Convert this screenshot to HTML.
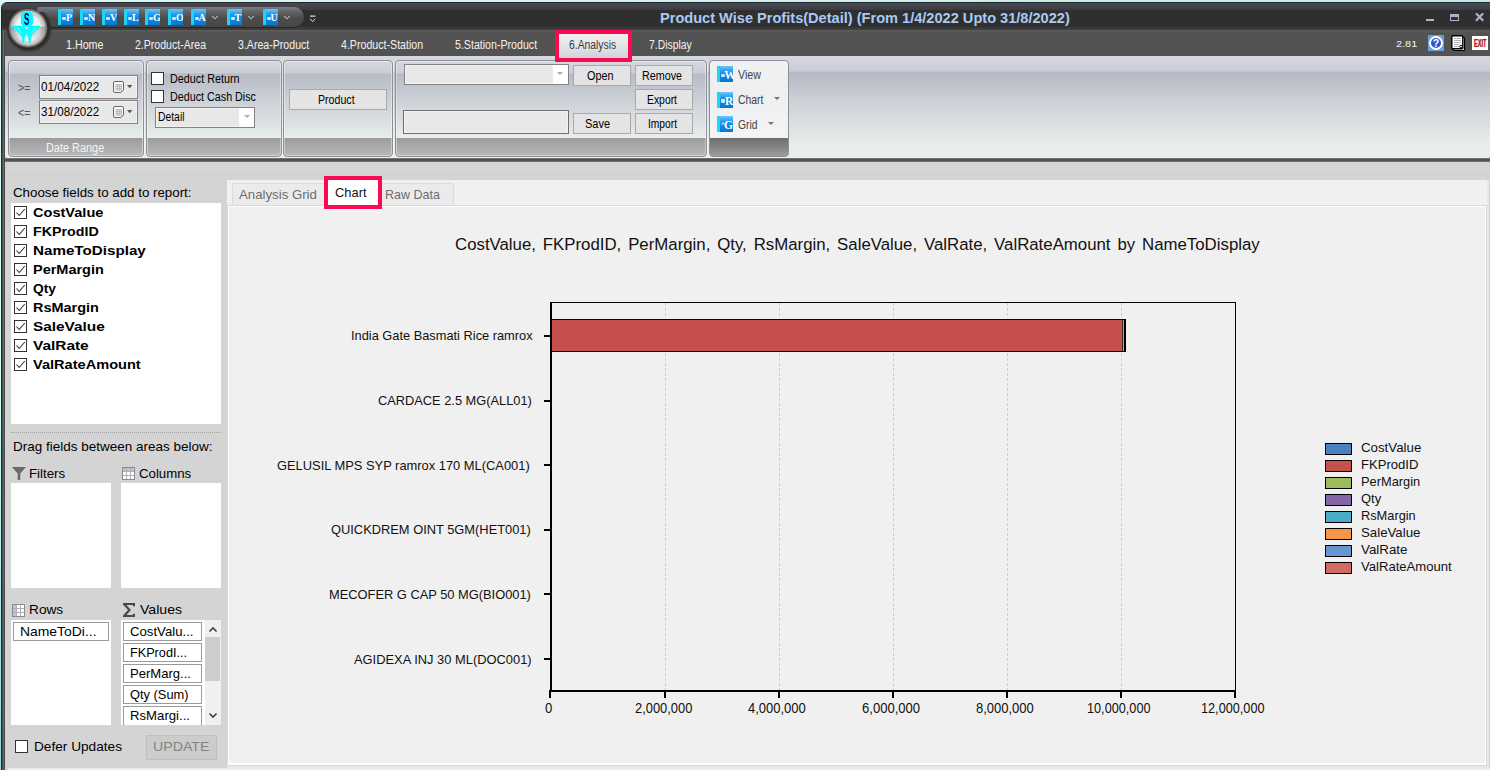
<!DOCTYPE html>
<html><head><meta charset="utf-8"><title>Product Wise Profits</title>
<style>
*{box-sizing:border-box;margin:0;padding:0}
html,body{width:1490px;height:770px;overflow:hidden}
body{position:relative;background:linear-gradient(#dcf8f4 0%,#ccfffa 50%,#8fd9d9 100%);font-family:"Liberation Sans",sans-serif;font-size:12px}
.a{position:absolute}
.t{position:absolute;white-space:pre;line-height:1;transform-origin:0 50%}
#win{left:1px;top:2px;width:1489px;height:768px;background:#d4d4d4;border-radius:6px 0 0 0;overflow:hidden}
/* title bar */
#tb{left:0;top:0;width:1489px;height:28px;background:linear-gradient(#25262a 0,#25262a 1px,#474a55 1px,#3a3c44 8px,#2f2f2f 8px,#2f2f2f 24px,#3a3a3a 26px,#424242 28px)}
#tabrow{left:0;top:28px;width:1489px;height:26px;background:linear-gradient(#5c5c5c 0,#565656 2px,#525252 3px,#525252 100%)}
#lb{left:0;top:28px;width:4px;height:740px;background:linear-gradient(90deg,#2a2a2a 0,#2a2a2a 1px,#4a4a4a 1px,#4a4a4a 2px,#686868 2px,#686868 3px,#484848 3px,#484848 4px)}
/* QAT */
#qat{left:36px;top:5px;width:267px;height:20px;border-radius:3px 10px 10px 3px;background:linear-gradient(#7a7e86 0,#6a6c70 15%,#5a5a5a 35%,#4c4c4c 55%,#474747 100%);box-shadow:0 1px 0 #262626,0 2px 0 #3a3a3a}
.qi{position:absolute;height:16px;background:linear-gradient(#74c6fb 0,#38a8f2 22%,#0e8ae6 50%,#0878d2 100%);border-left:3px solid #20d4f6;color:#fff;font-family:"Liberation Serif",serif;font-weight:bold;overflow:hidden;white-space:nowrap}
.qi b{position:absolute;top:1px;line-height:16px}
.qi i{position:absolute;left:1px;top:7.5px;width:4px;height:3.5px;background:#cfe6fb;border-radius:1px}
.chev{position:absolute;width:6px;height:6px;border-right:1.3px solid #d8d8d8;border-bottom:1.3px solid #d8d8d8;transform:rotate(45deg) scale(1,1)}
/* ribbon */
#rib{left:4px;top:54px;width:1485px;height:102px;border-radius:4px 3px 4px 4px;background:linear-gradient(#d6d9df 0,#c9cdd5 15px,#b4b9c5 16.5px,#c0c4cd 30px,#cdd0d6 45px,#dadedf 65px,#e6ecec 88px,#e9f0f0 100%);}
#ribsh{left:4px;top:156px;width:1485px;height:4px;background:linear-gradient(#8c8c8c,#505050 30%,#555 75%,#8a8a8a)}
.grp{position:absolute;top:58px;height:97px;border:1px solid #8e9096;border-radius:4px;background:linear-gradient(#d6d9df 0,#cacdd5 12px,#b6bbc6 13px,#c2c6ce 27px,#cfd2d8 42px,#dce0e1 62px,#e8eeee 77px,#9c9c9c 77px,#bcbcbc 97px);box-shadow:inset 0 0 0 1px rgba(255,255,255,.4),1px 0 0 rgba(255,255,255,.5)}
.grp.hot{box-shadow:none;background:linear-gradient(#f0f1f3 0,#eeeff1 40px,#f3f4f4 77px,#6c6c6c 77px,#a2a2a2 97px)}
.btn{position:absolute;background:#e4e4e4;border:1px solid #a9a9a9}
.inp{position:absolute;background:#e8e8e8;border:1px solid #838383;box-shadow:inset 0 0 0 1px #f2f2f2}
.cb{position:absolute;width:13px;height:13px;background:#fff;border:1px solid #333}
.dd{position:absolute;width:0;height:0;border-left:3px solid transparent;border-right:3px solid transparent;border-top:3.5px solid #777}
/* left panel */
.wbox{position:absolute;background:#fff}
.chip{position:absolute;background:#fff;border:1px solid #9a9a9a;height:19px}
.chk{position:absolute;width:13px;height:13px;border:1px solid #333;background:#fff}
.chk svg{position:absolute;left:0;top:0}
</style></head><body>
<div class="a" style="left:0;top:0;width:1490px;height:3px;background:linear-gradient(90deg,#dcf8f4,#bfece6)"></div>
<div id="win" class="a">
 <div id="tb" class="a"></div>
 <div id="tabrow" class="a"></div>
 <div id="lb" class="a"></div>
 <div class="a" style="left:0;top:5px;width:1px;height:23px;background:#222"></div>
 <!-- QAT -->
 <div id="qat" class="a"></div>
 <div id="orbshade" class="a" style="left:4px;top:3px;width:48px;height:48px;border-radius:50%;background:radial-gradient(circle at 50% 50%,#2c2c2c 60%,rgba(44,44,44,0) 70%);clip-path:inset(7px 0 0 0)"></div>
 <div class="qi" style="left:57px;top:7px;width:15px;font-size:10px"><i></i><b style="left:5px">P</b></div>
 <div class="qi" style="left:79px;top:7px;width:15px;font-size:10px"><i></i><b style="left:5px">N</b></div>
 <div class="qi" style="left:101px;top:7px;width:15px;font-size:10px"><i></i><b style="left:5px">V</b></div>
 <div class="qi" style="left:123px;top:7px;width:15px;font-size:10px"><i></i><b style="left:5px">L</b></div>
 <div class="qi" style="left:144px;top:7px;width:15px;font-size:10px"><i></i><b style="left:5px">G</b></div>
 <div class="qi" style="left:167px;top:7px;width:15px;font-size:10px"><i></i><b style="left:5px">O</b></div>
 <div class="qi" style="left:189.5px;top:7px;width:15px;font-size:10px"><i></i><b style="left:5px">A</b></div>
 <div class="qi" style="left:225.5px;top:7px;width:15px;font-size:10px"><i></i><b style="left:5px">T</b></div>
 <div class="qi" style="left:261.5px;top:7px;width:15px;font-size:10px"><i></i><b style="left:5px">U</b></div>
 <svg class="a" style="left:210.4px;top:13px" width="8" height="6" viewBox="0 0 8 6"><path d="M1.3 1 L4 3.8 L6.7 1" fill="none" stroke="#e4e4e4" stroke-width="1"/></svg>
 <svg class="a" style="left:246.4px;top:13px" width="8" height="6" viewBox="0 0 8 6"><path d="M1.3 1 L4 3.8 L6.7 1" fill="none" stroke="#e4e4e4" stroke-width="1"/></svg>
 <svg class="a" style="left:282.4px;top:13px" width="8" height="6" viewBox="0 0 8 6"><path d="M1.3 1 L4 3.8 L6.7 1" fill="none" stroke="#e4e4e4" stroke-width="1"/></svg>
 <svg class="a" style="left:308px;top:13px" width="8" height="8" viewBox="0 0 8 8"><path d="M1 1.2H6.4" stroke="#dcdcdc" stroke-width="1.2"/><path d="M1.2 3.8 L3.7 6.6 L6.2 3.8" fill="none" stroke="#dcdcdc" stroke-width="1"/></svg>
 <!-- orb -->
 <svg class="a" style="left:6px;top:5px" width="44" height="44" viewBox="6 5 44 44">
  <defs>
   <linearGradient id="og1" x1="0" y1="0" x2="0" y2="1"><stop offset="0" stop-color="#ffffff"/><stop offset="1" stop-color="#eeeeee"/></linearGradient>
   <linearGradient id="og2" x1="0" y1="0" x2="0" y2="1"><stop offset="0" stop-color="#bdbdbd"/><stop offset="0.55" stop-color="#e6e6e6"/><stop offset="1" stop-color="#ffffff"/></linearGradient>
   <radialGradient id="ogs" cx="0.5" cy="0.5" r="0.5"><stop offset="0.72" stop-color="#000" stop-opacity="0"/><stop offset="1" stop-color="#555" stop-opacity="0.35"/></radialGradient>
   <clipPath id="oc"><circle cx="27" cy="26.2" r="17.2"/></clipPath>
  </defs>
  <circle cx="27" cy="26.2" r="19.3" fill="#6e6e6e"/>
  <circle cx="27" cy="26.2" r="18.3" fill="#858585"/>
  <g clip-path="url(#oc)">
   <rect x="9" y="8" width="36" height="17.3" fill="url(#og1)"/>
   <rect x="9" y="25.3" width="36" height="19" fill="url(#og2)"/>
   <circle cx="27" cy="26.2" r="17.2" fill="url(#ogs)"/>
  </g>
  <polygon fill="#00ffff" points="10.8,23.8 40.0,23.8 36.8,27.0 33.6,30.0 31.0,33.2 29.9,36.4 29.6,40.8 27.7,40.8 27.5,36.0 25.5,31.4 23.5,36.0 23.3,40.8 21.4,40.8 21.1,36.4 19.9,33.2 17.0,30.0 13.6,27.0"/>
  <polygon fill="#f2eeee" points="22.6,24.4 25.5,27.3 28.6,24.4"/>
  <path d="M16.5 26 L20.5 31 M34.5 26 L30.5 31" stroke="#ffe2e2" stroke-width="1" opacity="0.75" fill="none"/>
  <polygon points="22.6,9.8 29.4,9.8 32.2,13 32.2,21.8 29,24.9 23,24.9 19.9,21.8 19.9,13" fill="#00ffff"/>
  <text x="0" y="0" font-family="Liberation Sans, sans-serif" font-size="16" font-weight="bold" fill="#000080" transform="translate(22.9 22.9) scale(0.5 1)">S</text>
 </svg>
 <!-- window buttons -->
 <div class="a" style="left:1425px;top:16.8px;width:7.5px;height:2.5px;background:#a9b4c6"></div>
 <div class="a" style="left:1449px;top:12px;width:9px;height:7px;border:1px solid #a9b4c6;border-top-width:3px"></div>
 <svg class="a" style="left:1474px;top:11px" width="10" height="9" viewBox="0 0 10 9"><path d="M1 0.3 L8.2 7.8 M8.2 0.3 L1 7.8" stroke="#a9b4c6" stroke-width="2.2"/></svg>
 <!-- right icons -->
 <div class="a" style="left:1427px;top:33px;width:16px;height:16px;background:#6a9de0"><div class="a" style="left:1px;top:1px;width:14px;height:14px;border-radius:50%;background:#2358cf;border:2px solid #fff;color:#fff;font-weight:bold;font-size:10.5px;line-height:10px;text-align:center">?</div></div>
 <svg class="a" style="left:1450px;top:33px" width="15" height="16" viewBox="0 0 15 16"><rect x="2.5" y="2.5" width="11" height="13" rx="1" fill="#fff" stroke="#000" stroke-width="1.2"/><rect x="0.8" y="0.8" width="11" height="13" rx="1" fill="#fff" stroke="#000" stroke-width="1.4"/><path d="M3 3.5H10M3 5.5H10M3 7.5H10M3 9.5H8M3 11.5H8" stroke="#b4b4b4" stroke-width="1"/><circle cx="10" cy="11.5" r="1.3" fill="#fff" stroke="#000" stroke-width="0.9"/></svg>
 <div class="a" style="left:1471px;top:34px;width:16px;height:14px;background:#fff"></div>
 <span class="t" style="left:1472.5px;top:36px;font-size:10.5px;font-weight:bold;color:#a81c22;transform:scaleX(0.53);text-shadow:0 0 1px #c86a6e">EXIT</span>
 <!-- ribbon -->
 <div id="rib" class="a"></div>
 <div id="ribsh" class="a"></div>
 <!-- groups -->
 <div class="grp" style="left:7px;width:136px"></div>
 <div class="grp" style="left:145px;width:136px"></div>
 <div class="grp" style="left:282px;width:110px"></div>
 <div class="grp" style="left:394px;width:312px"></div>
 <div class="grp hot" style="left:708px;width:80px"></div>
 <!-- analysis tab -->
 <div class="a" style="left:554px;top:28px;width:77px;height:32px;background:#fb0a52"></div>
 <div class="a" style="left:558px;top:32px;width:69px;height:24px;background:linear-gradient(#f0f0f0,#e4e5e8 50%,#cfd2da)"></div>
 <!-- group1 -->
 <div class="inp" style="left:38px;top:73px;width:99px;height:24px"></div>
 <div class="inp" style="left:38px;top:98px;width:99px;height:24px"></div>
 <svg class="a" style="left:112px;top:79px" width="11" height="12" viewBox="0 0 11 12"><rect x="0.5" y="0.5" width="10" height="11" rx="1.5" fill="#fbfbfd" stroke="#6e625f"/><rect x="2.5" y="3" width="6.5" height="6.7" fill="#b2b6c2"/><rect x="3.2" y="3.8" width="1" height="1" fill="#fff"/><rect x="3.2" y="5.8" width="1" height="1" fill="#fff"/><rect x="3.2" y="7.8" width="1" height="1" fill="#fff"/><rect x="5.2" y="3.8" width="1" height="1" fill="#fff"/><rect x="5.2" y="5.8" width="1" height="1" fill="#fff"/><rect x="5.2" y="7.8" width="1" height="1" fill="#fff"/><rect x="7.2" y="3.8" width="1" height="1" fill="#fff"/><rect x="7.2" y="5.8" width="1" height="1" fill="#fff"/><rect x="7.2" y="7.8" width="1" height="1" fill="#fff"/><polygon points="7.6,12 11,8.6 11,12" fill="#e8e8e8"/><path d="M7.8 11.5 L10.5 8.8" stroke="#6e625f" stroke-width="1"/></svg>
 <svg class="a" style="left:126px;top:83px" width="6" height="4" viewBox="0 0 6 4"><polygon points="0,0 5.4,0 2.7,3.2" fill="#555"/></svg>
 <svg class="a" style="left:112px;top:104px" width="11" height="12" viewBox="0 0 11 12"><rect x="0.5" y="0.5" width="10" height="11" rx="1.5" fill="#fbfbfd" stroke="#6e625f"/><rect x="2.5" y="3" width="6.5" height="6.7" fill="#b2b6c2"/><rect x="3.2" y="3.8" width="1" height="1" fill="#fff"/><rect x="3.2" y="5.8" width="1" height="1" fill="#fff"/><rect x="3.2" y="7.8" width="1" height="1" fill="#fff"/><rect x="5.2" y="3.8" width="1" height="1" fill="#fff"/><rect x="5.2" y="5.8" width="1" height="1" fill="#fff"/><rect x="5.2" y="7.8" width="1" height="1" fill="#fff"/><rect x="7.2" y="3.8" width="1" height="1" fill="#fff"/><rect x="7.2" y="5.8" width="1" height="1" fill="#fff"/><rect x="7.2" y="7.8" width="1" height="1" fill="#fff"/><polygon points="7.6,12 11,8.6 11,12" fill="#e8e8e8"/><path d="M7.8 11.5 L10.5 8.8" stroke="#6e625f" stroke-width="1"/></svg>
 <svg class="a" style="left:126px;top:108px" width="6" height="4" viewBox="0 0 6 4"><polygon points="0,0 5.4,0 2.7,3.2" fill="#555"/></svg>
 <!-- group2 -->
 <div class="cb" style="left:150px;top:70px"></div>
 <div class="cb" style="left:150px;top:88px"></div>
 <div class="inp" style="left:154px;top:105px;width:100px;height:21px"><div class="a" style="right:0;top:0;width:15px;height:19px;background:#fff"></div></div>
 <div class="dd" style="left:243px;top:113px;border-top-color:#aaa"></div>
 <!-- group3 -->
 <div class="btn" style="left:288px;top:87px;width:98px;height:21px"></div>
 <!-- group4 -->
 <div class="inp" style="left:403px;top:62px;width:165px;height:21px"><div class="a" style="right:0;top:0;width:15px;height:19px;background:#fff"></div></div>
 <div class="dd" style="left:556px;top:70px;border-top-color:#aaa"></div>
 <div class="inp" style="left:402px;top:108px;width:166px;height:24px;border-color:#6e6e6e"></div>
 <div class="btn" style="left:572px;top:63px;width:58px;height:21px"></div>
 <div class="btn" style="left:572px;top:111px;width:58px;height:21px"></div>
 <div class="btn" style="left:634px;top:63px;width:58px;height:21px"></div>
 <div class="btn" style="left:634px;top:87px;width:58px;height:21px"></div>
 <div class="btn" style="left:634px;top:111px;width:58px;height:21px"></div>
 <!-- group5 -->
 <div class="qi" style="left:716px;top:64px;width:16px;font-size:11.5px"><i></i><b style="left:4.3px">W</b></div>
 <div class="qi" style="left:716px;top:89.5px;width:16px;font-size:11.5px"><i></i><b style="left:5px">R</b></div>
 <div class="qi" style="left:716px;top:114px;width:16px;font-size:11.5px"><i style="background:none;color:#dff;font:bold 6px Liberation Sans,sans-serif;top:5px">^</i><b style="left:4px">G</b></div>
 <div class="dd" style="left:773px;top:95px"></div>
 <div class="dd" style="left:767px;top:120px"></div>

 <!-- left panel -->
 <div class="a" style="left:4px;top:167px;width:1485px;height:1px;background:#dadada"></div>
 <div class="wbox" style="left:10px;top:201px;width:210px;height:221px"></div>
 <div class="chk" style="left:13px;top:204px;border-color:#333"><svg width="11" height="11" viewBox="0 0 11 11"><path d="M1.5 5.5 L4.2 8.5 L9.8 2" fill="none" stroke="#333" stroke-width="1.1"/></svg></div>
 <div class="chk" style="left:13px;top:223px;border-color:#333"><svg width="11" height="11" viewBox="0 0 11 11"><path d="M1.5 5.5 L4.2 8.5 L9.8 2" fill="none" stroke="#333" stroke-width="1.1"/></svg></div>
 <div class="chk" style="left:13px;top:242px;border-color:#333"><svg width="11" height="11" viewBox="0 0 11 11"><path d="M1.5 5.5 L4.2 8.5 L9.8 2" fill="none" stroke="#333" stroke-width="1.1"/></svg></div>
 <div class="chk" style="left:13px;top:261px;border-color:#333"><svg width="11" height="11" viewBox="0 0 11 11"><path d="M1.5 5.5 L4.2 8.5 L9.8 2" fill="none" stroke="#333" stroke-width="1.1"/></svg></div>
 <div class="chk" style="left:13px;top:280px;border-color:#333"><svg width="11" height="11" viewBox="0 0 11 11"><path d="M1.5 5.5 L4.2 8.5 L9.8 2" fill="none" stroke="#333" stroke-width="1.1"/></svg></div>
 <div class="chk" style="left:13px;top:299px;border-color:#333"><svg width="11" height="11" viewBox="0 0 11 11"><path d="M1.5 5.5 L4.2 8.5 L9.8 2" fill="none" stroke="#333" stroke-width="1.1"/></svg></div>
 <div class="chk" style="left:13px;top:318px;border-color:#333"><svg width="11" height="11" viewBox="0 0 11 11"><path d="M1.5 5.5 L4.2 8.5 L9.8 2" fill="none" stroke="#333" stroke-width="1.1"/></svg></div>
 <div class="chk" style="left:13px;top:337px;border-color:#333"><svg width="11" height="11" viewBox="0 0 11 11"><path d="M1.5 5.5 L4.2 8.5 L9.8 2" fill="none" stroke="#333" stroke-width="1.1"/></svg></div>
 <div class="chk" style="left:13px;top:356px;border-color:#333"><svg width="11" height="11" viewBox="0 0 11 11"><path d="M1.5 5.5 L4.2 8.5 L9.8 2" fill="none" stroke="#333" stroke-width="1.1"/></svg></div>
 <div class="a" style="left:10px;top:430px;width:210px;height:0;border-top:1px dotted #a0a0a0"></div>
 <div class="wbox" style="left:10px;top:481px;width:100px;height:105px"></div>
 <div class="wbox" style="left:120px;top:481px;width:100px;height:105px"></div>
 <div class="wbox" style="left:10px;top:618px;width:100px;height:105px"></div>
 <div class="wbox" style="left:120px;top:618px;width:100px;height:105px;overflow:hidden">
   <div class="chip" style="left:2px;top:2px;width:79px"></div>
   <div class="chip" style="left:2px;top:23px;width:79px"></div>
   <div class="chip" style="left:2px;top:44px;width:79px"></div>
   <div class="chip" style="left:2px;top:65px;width:79px"></div>
   <div class="chip" style="left:2px;top:86px;width:79px;height:21px"></div>
   <div class="a" style="left:84px;top:0;width:16px;height:105px;background:#f0f0f0"></div>
   <div class="a" style="left:84px;top:17px;width:15px;height:44px;background:#cdcdcd"></div>
   <svg class="a" style="left:87px;top:6px" width="10" height="7" viewBox="0 0 10 7"><path d="M1.5 5.5 L5 2 L8.5 5.5" fill="none" stroke="#404040" stroke-width="1.6"/></svg>
   <svg class="a" style="left:87px;top:92px" width="10" height="7" viewBox="0 0 10 7"><path d="M1.5 1.5 L5 5 L8.5 1.5" fill="none" stroke="#404040" stroke-width="1.6"/></svg>
 </div>
 <div class="chip" style="left:12px;top:620px;width:96px"></div>
 <!-- icons filters/columns/rows/values -->
 <svg class="a" style="left:11px;top:465px" width="14" height="13" viewBox="0 0 14 13"><path d="M0 0H14L8.3 6.5V13H5.7V6.5Z" fill="#6b6b6b"/></svg>
 <svg class="a" style="left:121px;top:465px" width="13" height="13" viewBox="0 0 13 13"><rect x="0.5" y="0.5" width="12" height="12" fill="#fff" stroke="#8a8a8a"/><rect x="1" y="1" width="11" height="3" fill="#b8c4e0"/><path d="M4.5 1V12M8.5 1V12M1 4.5H12M1 8.5H12" stroke="#b0b0b0" stroke-width="1"/></svg>
 <svg class="a" style="left:11px;top:602px" width="13" height="13" viewBox="0 0 13 13"><rect x="0.5" y="0.5" width="12" height="12" fill="#fff" stroke="#8a8a8a"/><rect x="1" y="1" width="3" height="11" fill="#b8c4e0"/><path d="M4.5 1V12M8.5 1V12M1 4.5H12M1 8.5H12" stroke="#b0b0b0" stroke-width="1"/></svg>
 <svg class="a" style="left:122px;top:601px" width="12" height="14" viewBox="0 0 12 14"><path d="M11 3.2V1H1L6.5 7L1 13H11V10.8" fill="none" stroke="#484848" stroke-width="2.2"/></svg>
 <div class="chk" style="left:14px;top:738px;border-color:#333"></div>
 <div class="a" style="left:145px;top:733px;width:71px;height:25px;background:#ccc;border:1px solid #bfbfbf"></div>
 <div class="a" style="left:7px;top:766px;width:1482px;height:2px;background:#ececec"></div>

 <!-- tab control -->
 <div class="a" style="left:226px;top:178px;width:1262px;height:588px;background:#f0f0f0"></div>
 <div class="a" style="left:231px;top:181px;width:222px;height:23px;background:#ebebeb;border:1px solid #dcdcdc;border-bottom:none"></div>
 <div class="a" style="left:226px;top:203px;width:1260px;height:561px;border:1px solid #d9d9d9;background:#f0f0f0"><div class="a" style="left:0;top:0;right:0;bottom:0;border:1.5px solid #fff;border-bottom-width:2px"></div></div>
 <div class="a" style="left:1486px;top:178px;width:2px;height:588px;background:#e8e8e8"></div>
 <div class="a" style="left:226px;top:764px;width:1262px;height:2px;background:#e8e8e8"></div>
 <div class="a" style="left:323px;top:174px;width:58px;height:33px;background:#fb0a52"></div>
 <div class="a" style="left:327px;top:178px;width:50px;height:25px;background:#fff"></div>

 <!-- chart -->
 <svg class="a" style="left:0;top:0" width="1489" height="768" viewBox="1 2 1489 768" shape-rendering="crispEdges">
  <g stroke="#cdcdcd" stroke-width="1" stroke-dasharray="3 2">
   <path d="M665.5 303V690M779.5 303V690M893.5 303V690M1007.5 303V690M1121.5 303V690"/>
  </g>
  <path d="M551 302.5H1235.5V691" fill="none" stroke="#000" stroke-width="1"/>
  <rect x="551.5" y="319.5" width="574" height="32" fill="#c6504b" stroke="#000" stroke-width="1"/>
  <rect x="1122" y="320" width="1" height="31" fill="#3a2a20"/>
  <rect x="1123" y="320" width="1" height="31" fill="#f59d3e"/>
  <rect x="1124" y="319" width="2" height="33" fill="#000"/>
  <rect x="550" y="302" width="2" height="390" fill="#000"/>
  <rect x="549" y="690" width="687" height="2" fill="#000"/>
  <g fill="#000">
   <rect x="544" y="335" width="6" height="2"/><rect x="544" y="399.6" width="6" height="2"/><rect x="544" y="464.2" width="6" height="2"/>
   <rect x="544" y="528.8" width="6" height="2"/><rect x="544" y="593.4" width="6" height="2"/><rect x="544" y="658" width="6" height="2"/>
   <rect x="549" y="690" width="2" height="8"/><rect x="664" y="690" width="2" height="8"/><rect x="778" y="690" width="2" height="8"/>
   <rect x="892" y="690" width="2" height="8"/><rect x="1006" y="690" width="2" height="8"/><rect x="1120" y="690" width="2" height="8"/><rect x="1234" y="690" width="2" height="8"/>
  </g>
  <rect x="1325.5" y="443.5" width="26" height="11" fill="#4a81be" stroke="#000" stroke-width="1"/>
  <rect x="1325.5" y="460.5" width="26" height="11" fill="#c6514c" stroke="#000" stroke-width="1"/>
  <rect x="1325.5" y="477.5" width="26" height="11" fill="#9dbb5a" stroke="#000" stroke-width="1"/>
  <rect x="1325.5" y="494.5" width="26" height="11" fill="#8566a6" stroke="#000" stroke-width="1"/>
  <rect x="1325.5" y="511.5" width="26" height="11" fill="#4bacc6" stroke="#000" stroke-width="1"/>
  <rect x="1325.5" y="528.5" width="26" height="11" fill="#f79646" stroke="#000" stroke-width="1"/>
  <rect x="1325.5" y="545.5" width="26" height="11" fill="#6795cf" stroke="#000" stroke-width="1"/>
  <rect x="1325.5" y="562.5" width="26" height="11" fill="#d26a66" stroke="#000" stroke-width="1"/>
 </svg>
</div>
<div id="txt" class="a" style="left:0;top:0;width:1490px;height:770px">
<span class="t" style="left:660.2px;top:11.3px;font-size:14.5px;color:#a9c9f5;transform:scaleX(1.0054);font-weight:bold">Product Wise Profits(Detail) (From 1/4/2022 Upto 31/8/2022)</span>
<span class="t" style="left:66.0px;top:39.4px;font-size:12.5px;color:#f2f2f2;transform:scaleX(0.8565)">1.Home</span>
<span class="t" style="left:135.2px;top:39.4px;font-size:12.5px;color:#f2f2f2;transform:scaleX(0.8445)">2.Product-Area</span>
<span class="t" style="left:238.2px;top:39.4px;font-size:12.5px;color:#f2f2f2;transform:scaleX(0.8480)">3.Area-Product</span>
<span class="t" style="left:341.0px;top:39.4px;font-size:12.5px;color:#f2f2f2;transform:scaleX(0.8510)">4.Product-Station</span>
<span class="t" style="left:455.1px;top:39.4px;font-size:12.5px;color:#f2f2f2;transform:scaleX(0.8500)">5.Station-Product</span>
<span class="t" style="left:648.6px;top:39.4px;font-size:12.5px;color:#f2f2f2;transform:scaleX(0.8304)">7.Display</span>
<span class="t" style="left:569.2px;top:39.4px;font-size:12.5px;color:#3a3a3a;transform:scaleX(0.8283)">6.Analysis</span>
<span class="t" style="left:1395.8px;top:38.5px;font-size:9.6px;color:#f2f2f2;transform:scaleX(1.1344)">2.81</span>
<span class="t" style="left:18.4px;top:81.8px;font-size:12px;color:#555;transform:scaleX(0.8919)">&gt;=</span>
<span class="t" style="left:18.4px;top:106.8px;font-size:12px;color:#555;transform:scaleX(0.8919)">&lt;=</span>
<span class="t" style="left:41.3px;top:80.1px;font-size:13px;color:#000;transform:scaleX(0.8958)">01/04/2022</span>
<span class="t" style="left:41.3px;top:105.1px;font-size:13px;color:#000;transform:scaleX(0.8958)">31/08/2022</span>
<span class="t" style="left:46.1px;top:141.5px;font-size:12.5px;color:#f4f4f4;transform:scaleX(0.8723)">Date Range</span>
<span class="t" style="left:169.5px;top:72.8px;font-size:12px;color:#000;transform:scaleX(0.8982)">Deduct Return</span>
<span class="t" style="left:169.5px;top:90.8px;font-size:12px;color:#000;transform:scaleX(0.8954)">Deduct Cash Disc</span>
<span class="t" style="left:157.5px;top:110.8px;font-size:12px;color:#000;transform:scaleX(0.8635)">Detail</span>
<span class="t" style="left:318.4px;top:93.5px;font-size:12px;color:#000;transform:scaleX(0.8849)">Product</span>
<span class="t" style="left:586.5px;top:69.8px;font-size:12px;color:#000;transform:scaleX(0.9026)">Open</span>
<span class="t" style="left:642.0px;top:69.8px;font-size:12px;color:#000;transform:scaleX(0.8951)">Remove</span>
<span class="t" style="left:647.0px;top:93.8px;font-size:12px;color:#000;transform:scaleX(0.8649)">Export</span>
<span class="t" style="left:585.0px;top:117.8px;font-size:12px;color:#000;transform:scaleX(0.9138)">Save</span>
<span class="t" style="left:648.0px;top:117.8px;font-size:12px;color:#000;transform:scaleX(0.8525)">Import</span>
<span class="t" style="left:738.0px;top:68.6px;font-size:12.3px;color:#444;transform:scaleX(0.8700)">View</span>
<span class="t" style="left:737.5px;top:93.6px;font-size:12.3px;color:#444;transform:scaleX(0.8478)">Chart</span>
<span class="t" style="left:737.5px;top:118.6px;font-size:12.3px;color:#444;transform:scaleX(0.8393)">Grid</span>
<span class="t" style="left:13.2px;top:186.4px;font-size:13.3px;color:#000;transform:scaleX(1.0020)">Choose fields to add to report:</span>
<span class="t" style="left:32.9px;top:205.9px;font-size:13.2px;color:#000;transform:scaleX(1.1040);font-weight:bold">CostValue</span>
<span class="t" style="left:32.9px;top:224.9px;font-size:13.2px;color:#000;transform:scaleX(1.0804);font-weight:bold">FKProdID</span>
<span class="t" style="left:32.9px;top:243.9px;font-size:13.2px;color:#000;transform:scaleX(1.1514);font-weight:bold">NameToDisplay</span>
<span class="t" style="left:32.9px;top:262.9px;font-size:13.2px;color:#000;transform:scaleX(1.0984);font-weight:bold">PerMargin</span>
<span class="t" style="left:32.9px;top:281.9px;font-size:13.2px;color:#000;transform:scaleX(1.0416);font-weight:bold">Qty</span>
<span class="t" style="left:32.9px;top:300.9px;font-size:13.2px;color:#000;transform:scaleX(1.0966);font-weight:bold">RsMargin</span>
<span class="t" style="left:32.9px;top:319.9px;font-size:13.2px;color:#000;transform:scaleX(1.1641);font-weight:bold">SaleValue</span>
<span class="t" style="left:32.9px;top:338.9px;font-size:13.2px;color:#000;transform:scaleX(1.1688);font-weight:bold">ValRate</span>
<span class="t" style="left:32.9px;top:357.9px;font-size:13.2px;color:#000;transform:scaleX(1.1050);font-weight:bold">ValRateAmount</span>
<span class="t" style="left:13.2px;top:439.9px;font-size:13.3px;color:#000;transform:scaleX(1.0141)">Drag fields between areas below:</span>
<span class="t" style="left:29.3px;top:466.5px;font-size:13.3px;color:#000;transform:scaleX(0.9999)">Filters</span>
<span class="t" style="left:139.3px;top:466.5px;font-size:13.3px;color:#000;transform:scaleX(0.9949)">Columns</span>
<span class="t" style="left:29.3px;top:603.3px;font-size:13.3px;color:#000;transform:scaleX(1.0286)">Rows</span>
<span class="t" style="left:139.5px;top:603.3px;font-size:13.3px;color:#000;transform:scaleX(1.0587)">Values</span>
<span class="t" style="left:19.5px;top:624.7px;font-size:13.3px;color:#000;transform:scaleX(1.0457)">NameToDi...</span>
<span class="t" style="left:129.5px;top:624.7px;font-size:13.3px;color:#000;transform:scaleX(0.9912)">CostValu...</span>
<span class="t" style="left:129.5px;top:645.7px;font-size:13.3px;color:#000;transform:scaleX(0.9522)">FKProdI...</span>
<span class="t" style="left:129.5px;top:666.7px;font-size:13.3px;color:#000;transform:scaleX(0.9826)">PerMarg...</span>
<span class="t" style="left:129.5px;top:687.7px;font-size:13.3px;color:#000;transform:scaleX(0.9657)">Qty (Sum)</span>
<span class="t" style="left:129.5px;top:708.7px;font-size:13.3px;color:#000;transform:scaleX(0.9902)">RsMargi...</span>
<span class="t" style="left:33.5px;top:739.6px;font-size:13.3px;color:#000;transform:scaleX(1.0262)">Defer Updates</span>
<span class="t" style="left:152.5px;top:740.1px;font-size:13.3px;color:#838383;transform:scaleX(1.0670)">UPDATE</span>
<span class="t" style="left:239.1px;top:187.5px;font-size:13.3px;color:#6d6d6d;transform:scaleX(0.9945)">Analysis Grid</span>
<span class="t" style="left:335.3px;top:185.9px;font-size:13.3px;color:#111;transform:scaleX(0.9688)">Chart</span>
<span class="t" style="left:385.4px;top:187.5px;font-size:13.3px;color:#6d6d6d;transform:scaleX(0.9402)">Raw Data</span>
<span class="t" style="left:454.5px;top:236.0px;font-size:16.3px;color:#111;transform:scaleX(1.0320);word-spacing:2.15px">CostValue, FKProdID, PerMargin, Qty, RsMargin, SaleValue, ValRate, ValRateAmount by NameToDisplay</span>
<span class="t" style="left:350.6px;top:329.4px;font-size:13.3px;color:#111;transform:scaleX(0.9636)">India Gate Basmati Rice ramrox</span>
<span class="t" style="left:378.4px;top:393.9px;font-size:13.3px;color:#111;transform:scaleX(0.9635)">CARDACE 2.5 MG(ALL01)</span>
<span class="t" style="left:276.5px;top:458.7px;font-size:13.3px;color:#111;transform:scaleX(0.9687)">GELUSIL MPS SYP ramrox 170 ML(CA001)</span>
<span class="t" style="left:331.3px;top:523.4px;font-size:13.3px;color:#111;transform:scaleX(0.9670)">QUICKDREM OINT 5GM(HET001)</span>
<span class="t" style="left:329.2px;top:587.7px;font-size:13.3px;color:#111;transform:scaleX(0.9666)">MECOFER G CAP 50 MG(BIO001)</span>
<span class="t" style="left:354.2px;top:652.7px;font-size:13.3px;color:#111;transform:scaleX(0.9691)">AGIDEXA INJ 30 ML(DOC001)</span>
<span class="t" style="left:545.4px;top:701.1px;font-size:14px;color:#111;transform:scaleX(0.9363)">0</span>
<span class="t" style="left:634.5px;top:701.1px;font-size:14px;color:#111;transform:scaleX(0.9214)">2,000,000</span>
<span class="t" style="left:747.9px;top:701.1px;font-size:14px;color:#111;transform:scaleX(0.9278)">4,000,000</span>
<span class="t" style="left:861.8px;top:701.1px;font-size:14px;color:#111;transform:scaleX(0.9326)">6,000,000</span>
<span class="t" style="left:975.9px;top:701.1px;font-size:14px;color:#111;transform:scaleX(0.9278)">8,000,000</span>
<span class="t" style="left:1087.2px;top:701.1px;font-size:14px;color:#111;transform:scaleX(0.9061)">10,000,000</span>
<span class="t" style="left:1201.3px;top:701.1px;font-size:14px;color:#111;transform:scaleX(0.9061)">12,000,000</span>
<span class="t" style="left:1360.7px;top:441.2px;font-size:13.3px;color:#111;transform:scaleX(0.9988)">CostValue</span>
<span class="t" style="left:1360.7px;top:458.2px;font-size:13.3px;color:#111;transform:scaleX(0.9830)">FKProdID</span>
<span class="t" style="left:1360.7px;top:475.2px;font-size:13.3px;color:#111;transform:scaleX(0.9651)">PerMargin</span>
<span class="t" style="left:1360.7px;top:492.2px;font-size:13.3px;color:#111;transform:scaleX(0.9716)">Qty</span>
<span class="t" style="left:1360.7px;top:509.2px;font-size:13.3px;color:#111;transform:scaleX(0.9612)">RsMargin</span>
<span class="t" style="left:1360.7px;top:526.2px;font-size:13.3px;color:#111;transform:scaleX(0.9960)">SaleValue</span>
<span class="t" style="left:1360.7px;top:543.2px;font-size:13.3px;color:#111;transform:scaleX(1.0037)">ValRate</span>
<span class="t" style="left:1360.7px;top:560.2px;font-size:13.3px;color:#111;transform:scaleX(0.9842)">ValRateAmount</span>
</div>
</body></html>
